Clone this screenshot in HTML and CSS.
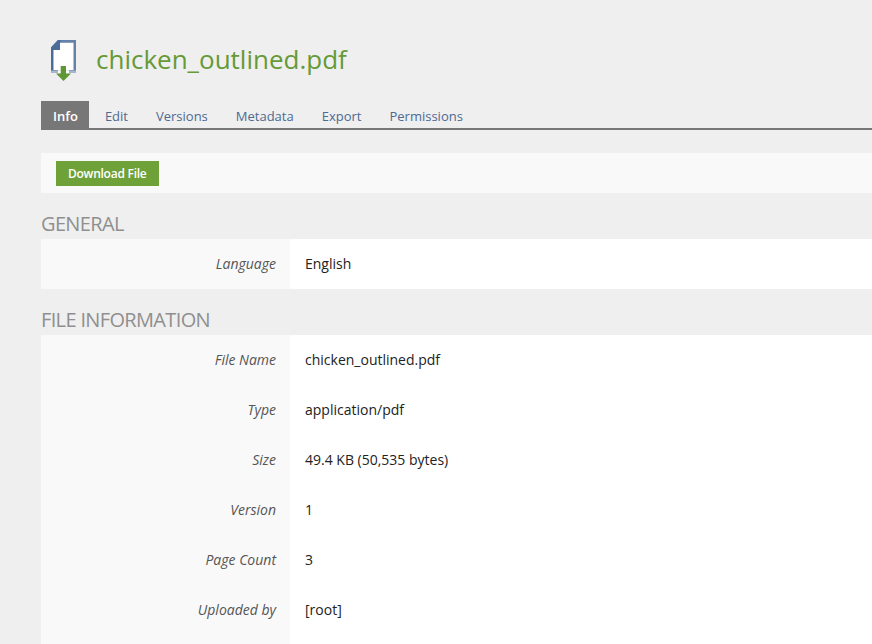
FILE: index.html
```html
<!DOCTYPE html>
<html lang="en">
<head>
<meta charset="utf-8">
<title>chicken_outlined.pdf</title>
<link rel="stylesheet" href="styles.css">
</head>
<body>
<header class="title-row">
  <svg class="file-icon" width="25" height="41" viewBox="0 0 25 41">
    <path d="M0 7.500L7 0H25V33H0Z" fill="#6481aa"/>
    <path d="M0 7.500L7 0H9.500V10H2.500V33H0Z" fill="#4b6b99"/>
    <path d="M2.500 10H9V2.700H22.500V30.200H2.500Z" fill="#fff"/>
    <path d="M0 30.500H2.500V31H7V33H0ZM25 30.500H22.500V31H18V33H25Z" fill="#a9b7cc"/>
    <path d="M7 33V30.200H18V33Z" fill="#fff"/>
    <path d="M9.700 26H15V33.500H20L12.500 41L5 33.500H9.700Z" fill="#5f9734"/>
  </svg>
  <h1 class="title">chicken_outlined.pdf</h1>
</header>
<nav class="tabs">
  <a class="tab active">Info</a>
  <a class="tab">Edit</a>
  <a class="tab">Versions</a>
  <a class="tab">Metadata</a>
  <a class="tab">Export</a>
  <a class="tab">Permissions</a>
</nav>
<div class="actions"><a class="button">Download File</a></div>
<h2 class="section">GENERAL</h2>
<dl class="fields">
  <div class="field"><dt>Language</dt><dd>English</dd></div>
</dl>
<h2 class="section">FILE INFORMATION</h2>
<dl class="fields">
  <div class="field"><dt>File Name</dt><dd>chicken_outlined.pdf</dd></div>
  <div class="field"><dt>Type</dt><dd>application/pdf</dd></div>
  <div class="field"><dt>Size</dt><dd>49.4 KB (50,535 bytes)</dd></div>
  <div class="field"><dt>Version</dt><dd>1</dd></div>
  <div class="field"><dt>Page Count</dt><dd>3</dd></div>
  <div class="field"><dt>Uploaded by</dt><dd>[root]</dd></div>
  <div class="field filler"><dt></dt><dd></dd></div>
</dl>
</body>
</html>
```
FILE: styles.css
```css
html, body {
  margin: 0;
  height: 644px;
  overflow: hidden;
}
body {
  background: #efefef;
  padding-left: 41px;
  font-family: "Open Sans", sans-serif;
  font-size: 14px;
  color: #222;
}
.title-row {
  display: flex;
  align-items: center;
  height: 101px;
  box-sizing: border-box;
  padding: 19px 0 0 10px;
}
.file-icon {
  margin-right: 20px;
  margin-top: 1px;
}
.title {
  margin: 0 0 2px;
  font-size: 26px;
  font-weight: 400;
  color: #659a37;
}
.tabs {
  display: flex;
  height: 27px;
  border-bottom: 2px solid #777;
}
.tab {
  padding: 0 14px;
  font-size: 13px;
  line-height: 31px;
  color: #4d6a92;
}
.tab.active {
  padding: 0 11px 0 12px;
  background: #777;
  color: #fff;
  font-weight: 600;
  margin-right: 2px;
}
.actions {
  margin-top: 23px;
  height: 40px;
  background: #f9f9f9;
  padding: 8px 15px 0;
  box-sizing: border-box;
}
.button {
  display: inline-block;
  height: 25px;
  line-height: 25px;
  padding: 0 12px;
  background: #6ea238;
  color: #fff;
  font-size: 12px;
  font-weight: 600;
  letter-spacing: -0.25px;
}
.section {
  margin: 0;
  padding-top: 18px;
  height: 46px;
  box-sizing: border-box;
  font-size: 20px;
  line-height: 26px;
  font-weight: 400;
  letter-spacing: -0.65px;
  color: #8f8f8f;
}
.fields {
  margin: 0;
  background: #fff;
}
.field {
  display: grid;
  grid-template-columns: 249px 1fr;
  height: 50px;
}
.field.filler {
  height: 9px;
}
.field dt {
  background: #f9f9f9;
  padding-right: 14px;
  text-align: right;
  font-style: italic;
  line-height: 50px;
  color: #555;
}
.field dd {
  margin: 0;
  padding-left: 15px;
  line-height: 50px;
}
```
